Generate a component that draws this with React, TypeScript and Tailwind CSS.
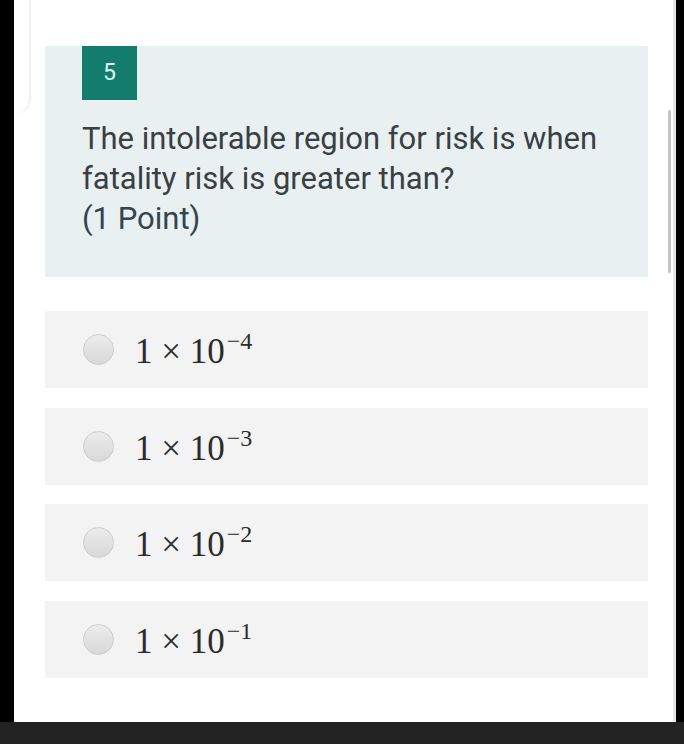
const options = ["4", "3", "2", "1"];

const Radio = () => (
  <span className="block w-[31px] h-[31px] shrink-0 rounded-full border border-[#cdcdcd] bg-gradient-to-b from-[#ececec] to-[#d8d8d8]" />
);

const OptionRow = ({ exp }: { exp: string }) => (
  <div className="flex h-[77px] items-center bg-[#f3f3f3] pl-[38px]">
    <Radio />
    <span
      className="ml-[21px] translate-y-[2px] text-[35px] leading-none text-[#2b2b2b]"
      style={{ fontFamily: '"Liberation Serif", "Times New Roman", serif' }}
    >
      1 × 10
      <span className="relative -top-[14px] ml-[2px] text-[24px]">−{exp}</span>
    </span>
  </div>
);

export default function App() {
  return (
    <div className="flex h-[744px] w-[684px] flex-col bg-[#232323]">
      <div className="flex h-[722px]">
        <div className="w-[14px] bg-black" />
        <div
          className="relative flex-1 border-r-[3px] border-[#e6e6e6] bg-white pl-[31px] pr-[25px] pt-[46px]"
          style={{ fontFamily: "Roboto, Arial, sans-serif" }}
        >
          {/* faint edge of the card behind */}
          <div className="absolute left-0 top-0 h-[115px] w-[17px] rounded-br-[18px] border-r-2 border-[#efefef]" />
          {/* scrollbar */}
          <div className="absolute left-[654px] top-[110px] h-[163px] w-[3px] rounded-full bg-[#c4c4c4]" />

          <div className="bg-[#e9f0f2] pb-[38px] pl-[37px] pr-[20px]">
            <div className="flex h-[54px] w-[55px] items-center justify-center bg-[#137c6d] text-[23px] text-[#dff5f0]">
              5
            </div>
            <p className="mt-[19px] text-[31px] leading-[40px] text-[#3a3f43]">
              The intolerable region for risk is when
              <br />
              fatality risk is greater than?
              <br />
              <span className="text-[#30454f]">(1 Point)</span>
            </p>
          </div>

          <div className="mt-[34px] flex flex-col gap-[19.5px]">
            {options.map((exp) => (
              <OptionRow key={exp} exp={exp} />
            ))}
          </div>
        </div>
        <div className="w-[8px] bg-black" />
      </div>
    </div>
  );
}
